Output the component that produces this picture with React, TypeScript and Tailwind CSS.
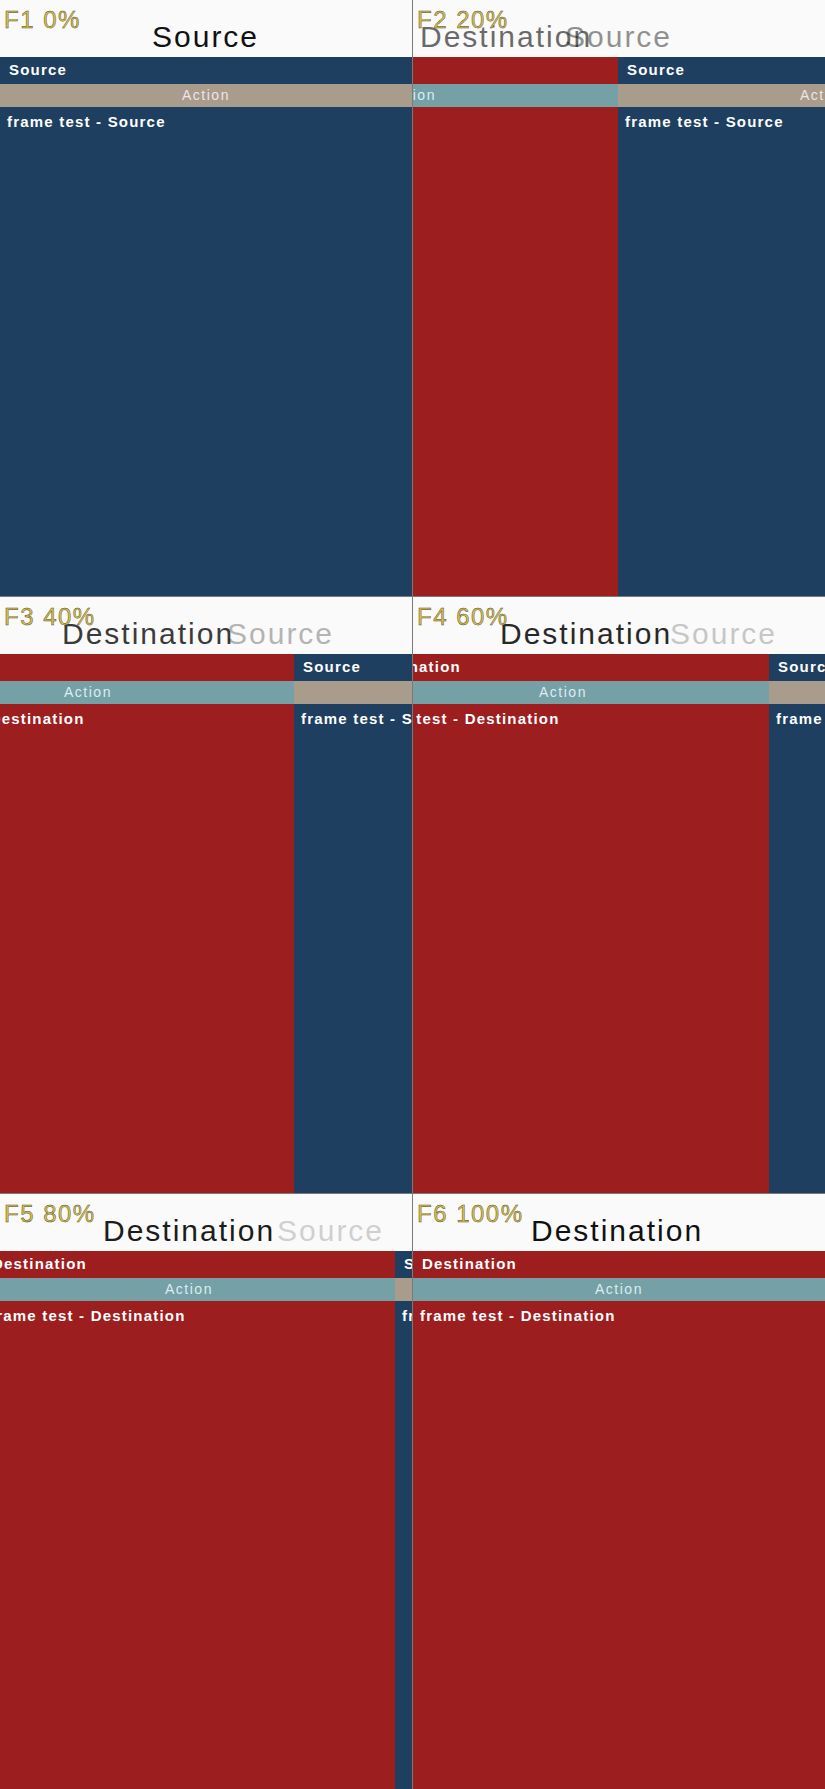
type TitleState = { x: number; op: number };

interface Frame {
  label: string;
  offset: number;
  dest: TitleState | null;
  src: TitleState | null;
}

const FRAMES: Frame[] = [
  { label: 'F1 0%', offset: 0, dest: null, src: { x: 152, op: 1 } },
  { label: 'F2 20%', offset: 205, dest: { x: 7, op: 0.62 }, src: { x: 152, op: 0.45 } },
  { label: 'F3 40%', offset: 294, dest: { x: 62, op: 0.82 }, src: { x: 227, op: 0.3 } },
  { label: 'F4 60%', offset: 356, dest: { x: 87, op: 0.9 }, src: { x: 257, op: 0.22 } },
  { label: 'F5 80%', offset: 395, dest: { x: 103, op: 0.95 }, src: { x: 277, op: 0.18 } },
  { label: 'F6 100%', offset: 412, dest: { x: 118, op: 1 }, src: null },
];

function Page({ name, kind }: { name: string; kind: 'src' | 'dest' }) {
  const isSrc = kind === 'src';
  return (
    <div
      className={
        isSrc
          ? 'flex h-full w-[412px] shrink-0 flex-col bg-[#1e3f5f]'
          : 'flex h-full w-[412px] shrink-0 flex-col bg-[#9c1e1f]'
      }
    >
      <div className="flex h-[27px] items-center pl-[9px] text-[15px] font-bold tracking-[1.2px] text-white">
        {name}
      </div>
      <div
        className={
          isSrc
            ? 'flex h-[23px] items-center justify-center bg-[#a99c8d] text-[14px] tracking-[1.5px] text-[#eee4ea]'
            : 'flex h-[23px] items-center justify-center bg-[#75a0a5] text-[14px] tracking-[1.5px] text-[#dcedf0]'
        }
      >
        Action
      </div>
      <div className="whitespace-nowrap pl-[7px] pt-[4px] text-[15px] font-bold tracking-[1.2px] text-white">
        frame test - {name}
      </div>
    </div>
  );
}

function FrameCell({ frame }: { frame: Frame }) {
  return (
    <div className="flex h-full w-[412px] flex-col overflow-hidden bg-[#fafafa]">
      <div className="relative h-[57px] shrink-0 overflow-hidden bg-[#fafafa]">
        {frame.src && (
          <span
            className="absolute top-[22px] whitespace-nowrap text-[30px] leading-none tracking-[2px] text-[#111]"
            style={{ left: frame.src.x, opacity: frame.src.op }}
          >
            Source
          </span>
        )}
        {frame.dest && (
          <span
            className="absolute top-[22px] whitespace-nowrap text-[30px] leading-none tracking-[2px] text-[#111]"
            style={{ left: frame.dest.x, opacity: frame.dest.op }}
          >
            Destination
          </span>
        )}
        {/* frame marker, drawn over the titles */}
        <span className="absolute left-[4px] top-[8px] text-[24px] leading-none tracking-[1.5px] text-[#d6c04e] [-webkit-text-stroke:0.45px_#4f4a2a]">
          {frame.label}
        </span>
      </div>
      <div className="flex-1 overflow-hidden">
        <div
          className="flex h-full w-[824px]"
          style={{ transform: `translateX(${frame.offset - 412}px)` }}
        >
          <Page name="Destination" kind="dest" />
          <Page name="Source" kind="src" />
        </div>
      </div>
    </div>
  );
}

export default function App() {
  return (
    <div className="grid w-[825px] grid-cols-[412px_412px] grid-rows-[596px_596px_595px] gap-px bg-[#7a7a7a] font-['Liberation_Sans',Arial,sans-serif]">
      {FRAMES.map((f) => (
        <FrameCell key={f.label} frame={f} />
      ))}
    </div>
  );
}
